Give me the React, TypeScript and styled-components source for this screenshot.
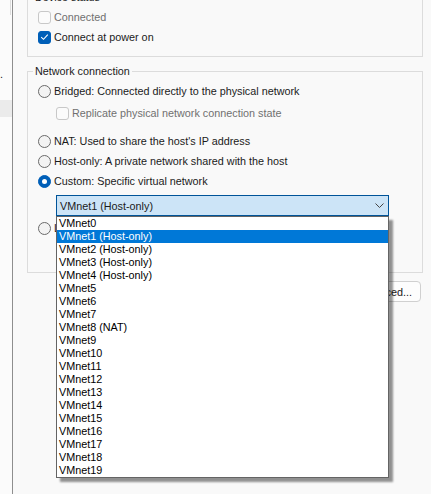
import React from 'react';
import styled, { createGlobalStyle } from 'styled-components';

const GlobalStyle = createGlobalStyle`
  html, body {
    margin: 0;
    padding: 0;
    background: #f9f9f9;
  }
  body {
    font-family: "Liberation Sans", Arial, sans-serif;
    font-size: 10.8px;
    color: #1b1b1b;
  }
`;

const Page = styled.div`
  width: 431px;
  height: 494px;
  overflow: hidden;
  display: flex;
  background: #f9f9f9;
`;

// the device list on the left, almost entirely cut off
const DeviceList = styled.div`
  width: 12px;
  flex: none;
  border-right: 1px solid #8e8e8e;
  background: #fbfbfb;
  display: flex;
  flex-direction: column;
`;

const ScrollStub = styled.div`
  height: 15px;
  width: 11px;
  border-right: 1px solid #dcdcdc;
  box-sizing: border-box;
`;

const DeviceRow = styled.div<{ $selected?: boolean }>`
  height: 17px;
  line-height: 17px;
  white-space: nowrap;
  overflow: hidden;
  color: #222;
  background: ${(p) => (p.$selected ? '#ebebeb' : 'transparent')};
`;

const Main = styled.div`
  flex: 1;
  padding: 0 8px 0 14px;
  display: flex;
  flex-direction: column;
`;

const Group = styled.fieldset<{ $top?: number }>`
  margin: ${(p) => p.$top ?? 8}px 0 0 0;
  padding: 3px 10px ${(p) => (p.$top !== undefined ? 9 : 10)}px 10px;
  border: 1px solid #dcdcdc;
  min-width: 0;
  display: flex;
  flex-direction: column;
`;

const Legend = styled.legend`
  margin-left: -5px;
  padding: 0 2px;
  line-height: 13px;
  color: #1b1b1b;
`;

const Row = styled.label<{ $indent?: number; $gap?: number }>`
  display: flex;
  align-items: center;
  gap: 3px;
  height: 20px;
  margin-top: ${(p) => p.$gap ?? 0}px;
  margin-left: ${(p) => p.$indent ?? 0}px;
  white-space: nowrap;
`;

const Text = styled.span<{ $disabled?: boolean }>`
  color: ${(p) => (p.$disabled ? '#707070' : '#1b1b1b')};
`;

const CheckBox = styled.span<{ $checked?: boolean; $disabled?: boolean }>`
  width: 13px;
  height: 13px;
  box-sizing: border-box;
  border-radius: 3px;
  flex: none;
  display: flex;
  align-items: center;
  justify-content: center;
  background: ${(p) => (p.$checked ? '#005fb8' : '#fbfbfb')};
  border: 1px solid ${(p) => (p.$checked ? '#005fb8' : p.$disabled ? '#c8c8c8' : '#8a8a8a')};
`;

const Radio = styled.span<{ $checked?: boolean }>`
  width: 13px;
  height: 13px;
  box-sizing: border-box;
  border-radius: 50%;
  flex: none;
  display: flex;
  align-items: center;
  justify-content: center;
  background: ${(p) => (p.$checked ? '#005fb8' : '#f3f3f3')};
  border: 1px solid ${(p) => (p.$checked ? '#005fb8' : '#6a6a6a')};
`;

const RadioDot = styled.span`
  width: 5px;
  height: 5px;
  border-radius: 50%;
  background: #fff;
`;

const Combo = styled.div<{ $open?: boolean; $gap?: number }>`
  position: relative;
  margin-top: ${(p) => p.$gap ?? 0}px;
  margin-left: 18px;
  width: 333px;
  height: 21px;
  box-sizing: border-box;
  display: flex;
  align-items: center;
  justify-content: space-between;
  padding: 0 4px 0 3px;
  background: ${(p) => (p.$open ? '#cce4f7' : '#fdfdfd')};
  border: 1px solid ${(p) => (p.$open ? '#005499' : '#d0d0d0')};
  border-radius: ${(p) => (p.$open ? '0' : '3px')};
`;

const ComboValue = styled.span`
  color: #1b1b1b;
`;

const DropList = styled.ul`
  position: absolute;
  top: calc(100% + 1px);
  left: -1px;
  width: calc(100% + 2px);
  box-sizing: border-box;
  margin: 0;
  padding: 0;
  list-style: none;
  background: #fff;
  border: 1px solid #646464;
  box-shadow: 4px 4px 2px rgba(0, 0, 0, 0.42);
  z-index: 10;
`;

const Option = styled.li<{ $selected?: boolean }>`
  height: 13px;
  line-height: 13px;
  padding-left: 2px;
  white-space: nowrap;
  color: ${(p) => (p.$selected ? '#fff' : '#000')};
  background: ${(p) => (p.$selected ? '#0078d7' : 'transparent')};
`;

const ButtonRow = styled.div`
  display: flex;
  justify-content: flex-end;
  gap: 8px;
  margin-top: 8px;
  padding-right: 2px;
`;

const Button = styled.button`
  width: 75px;
  height: 21px;
  box-sizing: border-box;
  padding: 0;
  font: inherit;
  color: #1b1b1b;
  background: #fdfdfd;
  border: 1px solid #d0d0d0;
  border-radius: 4px;
`;

const Chevron = () => (
  <svg width="9" height="5" viewBox="0 0 9 5">
    <path d="M0.5 0.5 L4.5 4.5 L8.5 0.5" fill="none" stroke="#444" strokeWidth="1" />
  </svg>
);

const Tick = () => (
  <svg width="9" height="8" viewBox="0 0 9 8">
    <path d="M1.2 4.2 L3.5 6.3 L7.8 1.6" fill="none" stroke="#fff" strokeWidth="1.1" />
  </svg>
);

const networks = [
  'VMnet0',
  'VMnet1 (Host-only)',
  'VMnet2 (Host-only)',
  'VMnet3 (Host-only)',
  'VMnet4 (Host-only)',
  'VMnet5',
  'VMnet6',
  'VMnet7',
  'VMnet8 (NAT)',
  'VMnet9',
  'VMnet10',
  'VMnet11',
  'VMnet12',
  'VMnet13',
  'VMnet14',
  'VMnet15',
  'VMnet16',
  'VMnet17',
  'VMnet18',
  'VMnet19',
];

const selected = 'VMnet1 (Host-only)';

const App: React.FC = () => {
  return (
    <>
      <GlobalStyle />
      <Page>
        <DeviceList>
          <ScrollStub />
          <DeviceRow />
          <DeviceRow />
          <DeviceRow />
          <DeviceRow>.</DeviceRow>
          <DeviceRow />
          <DeviceRow $selected />
        </DeviceList>

        <Main>
          <Group $top={-9}>
            <Legend>Device status</Legend>
            <Row>
              <CheckBox $disabled />
              <Text $disabled>Connected</Text>
            </Row>
            <Row>
              <CheckBox $checked>
                <Tick />
              </CheckBox>
              <Text>Connect at power on</Text>
            </Row>
          </Group>

          <Group>
            <Legend>Network connection</Legend>
            <Row>
              <Radio />
              <Text>Bridged: Connected directly to the physical network</Text>
            </Row>
            <Row $indent={18} $gap={2}>
              <CheckBox $disabled />
              <Text $disabled>Replicate physical network connection state</Text>
            </Row>
            <Row $gap={8}>
              <Radio />
              <Text>NAT: Used to share the host's IP address</Text>
            </Row>
            <Row>
              <Radio />
              <Text>Host-only: A private network shared with the host</Text>
            </Row>
            <Row>
              <Radio $checked>
                <RadioDot />
              </Radio>
              <Text>Custom: Specific virtual network</Text>
            </Row>
            <Combo $open $gap={4}>
              <ComboValue>{selected}</ComboValue>
              <Chevron />
              <DropList>
                {networks.map((n) => (
                  <Option key={n} $selected={n === selected}>
                    {n}
                  </Option>
                ))}
              </DropList>
            </Combo>
            <Row $gap={2}>
              <Radio />
              <Text>LAN segment:</Text>
            </Row>
            <Combo $gap={3}>
              <ComboValue />
              <Chevron />
            </Combo>
          </Group>

          <ButtonRow>
            <Button>LAN Segments...</Button>
            <Button>Advanced...</Button>
          </ButtonRow>
        </Main>
      </Page>
    </>
  );
};

export default App;
